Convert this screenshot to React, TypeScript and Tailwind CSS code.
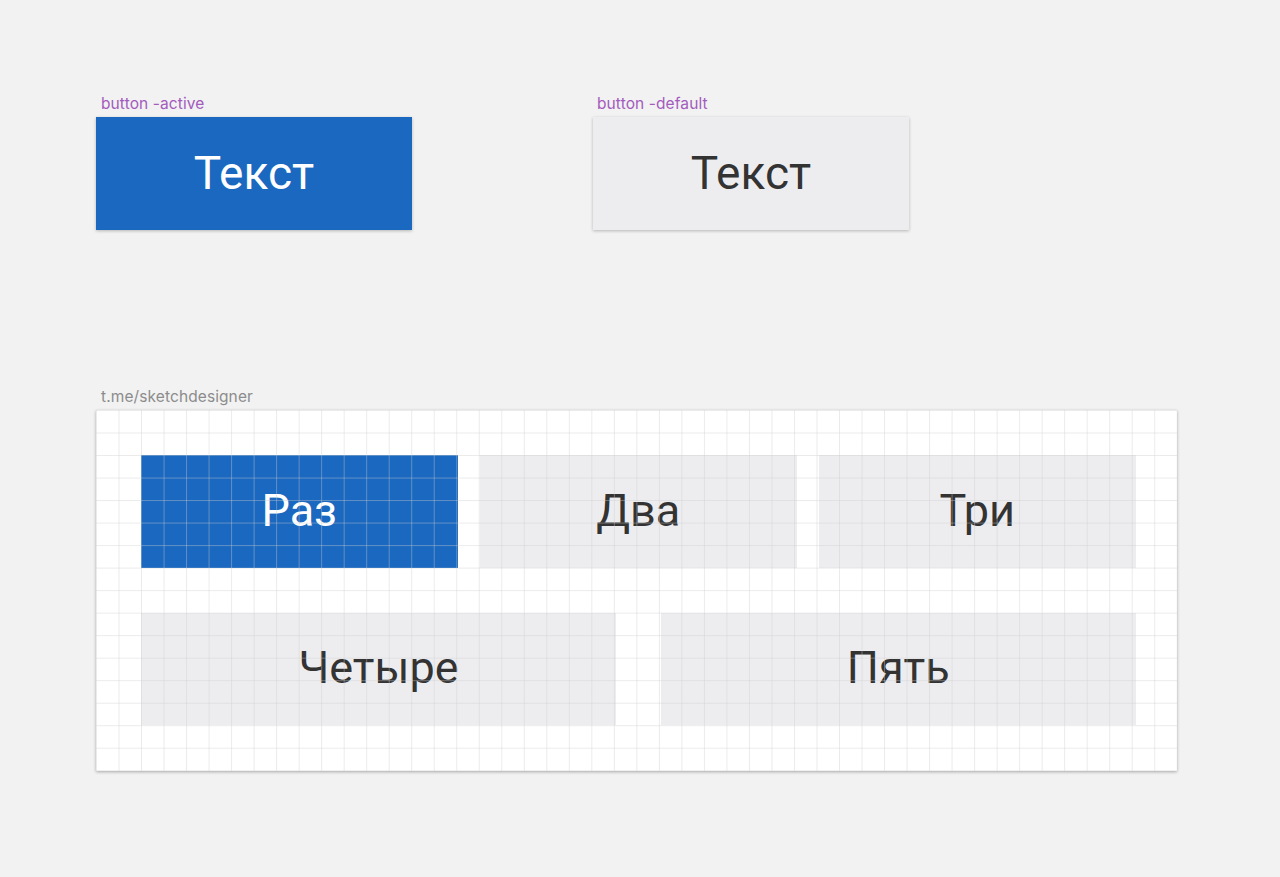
import React from 'react';

const labelCls = "font-['Inter',sans-serif] text-[15.5px] leading-[18px] tracking-[0.1px]";

const Button = ({ active, text }: { active?: boolean; text: string }) => (
  <div
    className={`w-[316px] h-[113px] flex items-center justify-center shadow-[0_1px_3px_rgba(0,0,0,0.25)] ${
      active ? 'bg-[#1a68bf] text-white' : 'bg-[#ededf0] text-[#333333]'
    }`}
  >
    <span className="text-[46px] leading-none font-['Roboto',sans-serif] pb-[2px]">{text}</span>
  </div>
);

const Cell = ({ active, text, w }: { active?: boolean; text: string; w: string }) => (
  <div
    className={`${w} shrink-0 h-[112.5px] flex items-center justify-center ${
      active ? 'bg-[#1a68bf] text-white' : 'bg-[#ededf0] text-[#333333]'
    }`}
  >
    <span className="text-[45px] leading-none font-['Roboto',sans-serif] pb-[2px]">{text}</span>
  </div>
);

export default function App() {
  return (
    <div className="min-h-[877px] w-full bg-[#f2f2f2] pl-[96px] pt-[95px]">
      <div className="flex gap-[181px]">
        <div>
          <div className={`${labelCls} text-[#a35bbd] pl-[5px] mb-[4px]`}>button -active</div>
          <Button active text="Текст" />
        </div>
        <div>
          <div className={`${labelCls} text-[#a35bbd] pl-[4px] mb-[4px]`}>button -default</div>
          <Button text="Текст" />
        </div>
      </div>

      <div className="mt-[158px]">
        <div className={`${labelCls} text-[#8c8c8c] pl-[5px] mb-[4px]`}>t.me/sketchdesigner</div>
        <div className="relative w-[1081px] h-[361px] bg-white shadow-[0_1px_3px_rgba(0,0,0,0.3)] pl-[45px] pt-[45px]">
          <div className="flex flex-col gap-[45px]">
            <div className="flex gap-[22.5px]">
              <Cell active text="Раз" w="w-[316.5px]" />
              <Cell text="Два" w="w-[316.5px]" />
              <Cell text="Три" w="w-[316.5px]" />
            </div>
            <div className="flex gap-[45px]">
              <Cell text="Четыре" w="w-[475px]" />
              <Cell text="Пять" w="w-[474.5px]" />
            </div>
          </div>
          <div className="absolute inset-0 pointer-events-none bg-[linear-gradient(to_right,rgba(205,205,205,0.4)_1px,transparent_1px),linear-gradient(to_bottom,rgba(205,205,205,0.4)_1px,transparent_1px)] bg-[size:22.52px_22.52px]" />
        </div>
      </div>
    </div>
  );
}
